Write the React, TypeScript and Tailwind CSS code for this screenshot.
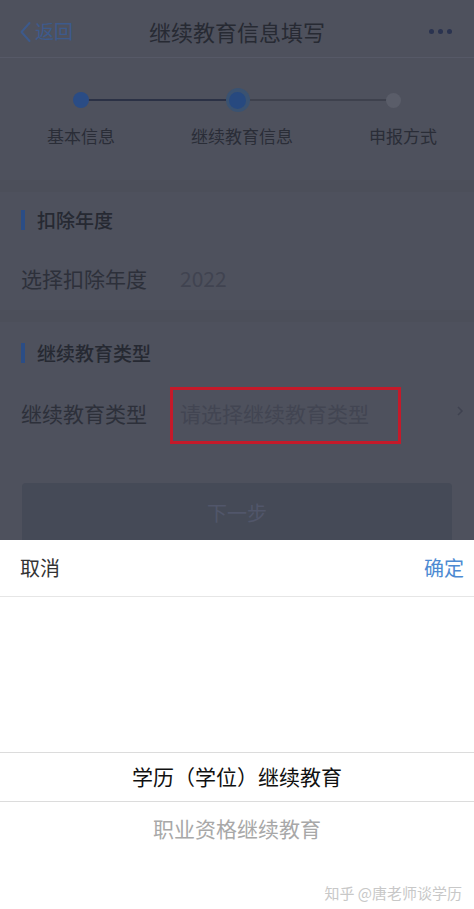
import React from "react";

const font = { fontFamily: '"Noto Sans CJK SC", "Noto Sans", sans-serif' };

export default function App() {
  return (
    <div className="w-[474px] h-[909px] overflow-hidden bg-white flex flex-col" style={font}>
      {/* dimmed page */}
      <div className="h-[540px] shrink-0 bg-[#4e515d] flex flex-col overflow-hidden">
        {/* header */}
        <div className="h-[58px] shrink-0 flex items-center justify-between pl-[19px] pr-[22px] pt-[6px] border-b border-[#565967] relative">
          <div className="flex items-center text-[#3d5a8c] text-[19px] gap-[3px]">
            <svg width="13" height="22" viewBox="0 0 13 22" fill="none">
              <path d="M10.5 2 L2.5 11 L10.5 20" stroke="#3d5a8c" strokeWidth="2" strokeLinecap="round" strokeLinejoin="round" />
            </svg>
            <span>返回</span>
          </div>
          <div className="absolute left-0 right-0 top-[6px] bottom-0 flex items-center justify-center text-[22px] text-[#272a33] pointer-events-none">
            继续教育信息填写
          </div>
          <div className="flex gap-[4px] items-center">
            <span className="w-[5px] h-[5px] rounded-full bg-[#2a3350]" />
            <span className="w-[5px] h-[5px] rounded-full bg-[#2a3350]" />
            <span className="w-[5px] h-[5px] rounded-full bg-[#2a3350]" />
          </div>
        </div>

        {/* steps */}
        <div className="h-[122px] shrink-0 flex flex-col pt-[31px]">
          <div className="relative h-[22px] mx-[81px] flex items-center justify-between">
            <div className="absolute left-0 w-1/2 top-[10px] h-[2px] bg-[#2b3145]" />
            <div className="absolute right-0 w-1/2 top-[10px] h-[2px] bg-[#3e414d]" />
            <span className="relative -ml-[8px] w-[16px] h-[16px] rounded-full bg-[#2a4c85]" />
            <span className="relative w-[24px] h-[24px] rounded-full bg-[#3a5271] flex items-center justify-center">
              <span className="w-[17px] h-[17px] rounded-full bg-[#27497f]" />
            </span>
            <span className="relative -mr-[8px] w-[15px] h-[15px] rounded-full bg-[#5a5d69]" />
          </div>
          <div className="flex justify-between mt-[13px] pl-[21px] pr-[11px] text-[17px] text-[#2a2d37] leading-[24px]">
            <span className="w-[120px] text-center">基本信息</span>
            <span className="w-[120px] text-center whitespace-nowrap">继续教育信息</span>
            <span className="w-[120px] text-center">申报方式</span>
          </div>
        </div>

        <div className="h-[12px] shrink-0 bg-[#4c4f5a]" />

        {/* section 1 */}
        <div className="flex flex-col">
          <div className="h-[56px] flex items-center px-[21px] gap-[12px]">
            <span className="w-[4px] h-[20px] bg-[#2b4d85]" />
            <span className="text-[19px] font-medium text-[#262932]">扣除年度</span>
          </div>
          <div className="h-[62px] flex items-center px-[21px] text-[21px]">
            <span className="w-[159px] text-[#2d303a]">选择扣除年度</span>
            <span className="text-[#404350]">2022</span>
          </div>
        </div>

        <div className="h-[12px] shrink-0 bg-[#4c4f5a]" />

        {/* section 2 */}
        <div className="flex flex-col">
          <div className="h-[62px] flex items-center px-[21px] gap-[12px]">
            <span className="w-[4px] h-[20px] bg-[#2b4d85]" />
            <span className="text-[19px] font-medium text-[#262932]">继续教育类型</span>
          </div>
          <div className="h-[60px] flex items-center pl-[21px] pr-[10px] text-[21px] pt-[3px]">
            <span className="w-[149px] text-[#2d303a] -mt-[3px]">继续教育类型</span>
            <div className="w-[231px] h-[57px] border-[3px] border-[#c41a2a] flex items-center pl-[7px] pb-[4px] text-[#424552] whitespace-nowrap">
              请选择继续教育类型
            </div>
            <div className="flex-1 flex justify-end -mt-[10px]">
              <svg width="8" height="12" viewBox="0 0 8 12" fill="none">
                <path d="M2 2 L6 6 L2 10" stroke="#3f4250" strokeWidth="1.5" />
              </svg>
            </div>
          </div>
        </div>

        {/* button */}
        <div className="px-[22px] pt-[39px]">
          <div className="h-[60px] rounded-[4px] bg-[#454a57] flex items-center justify-center text-[20px] text-[#51566a]">
            下一步
          </div>
        </div>
      </div>

      {/* bottom sheet */}
      <div className="flex-1 bg-white flex flex-col">
        <div className="h-[57px] shrink-0 flex items-center justify-between pl-[20px] pr-[10px] border-b border-[#e6e6e6] text-[20px]">
          <span className="text-[#333333]">取消</span>
          <span className="text-[#4d8ad2]">确定</span>
        </div>
        <div className="h-[155px] shrink-0" />
        <div className="h-[50px] shrink-0 flex items-center justify-center border-y border-[#dcdcdc] text-[21px] text-[#111111]">
          学历（学位）继续教育
        </div>
        <div className="h-[53px] shrink-0 flex items-center justify-center text-[21px] text-[#a8a8a8]">
          职业资格继续教育
        </div>
        <div className="flex-1 flex items-end justify-end pr-[12px] pb-[5px]">
          <span className="text-[15px] text-[#c8c8c8]">知乎 @唐老师谈学历</span>
        </div>
      </div>
    </div>
  );
}
